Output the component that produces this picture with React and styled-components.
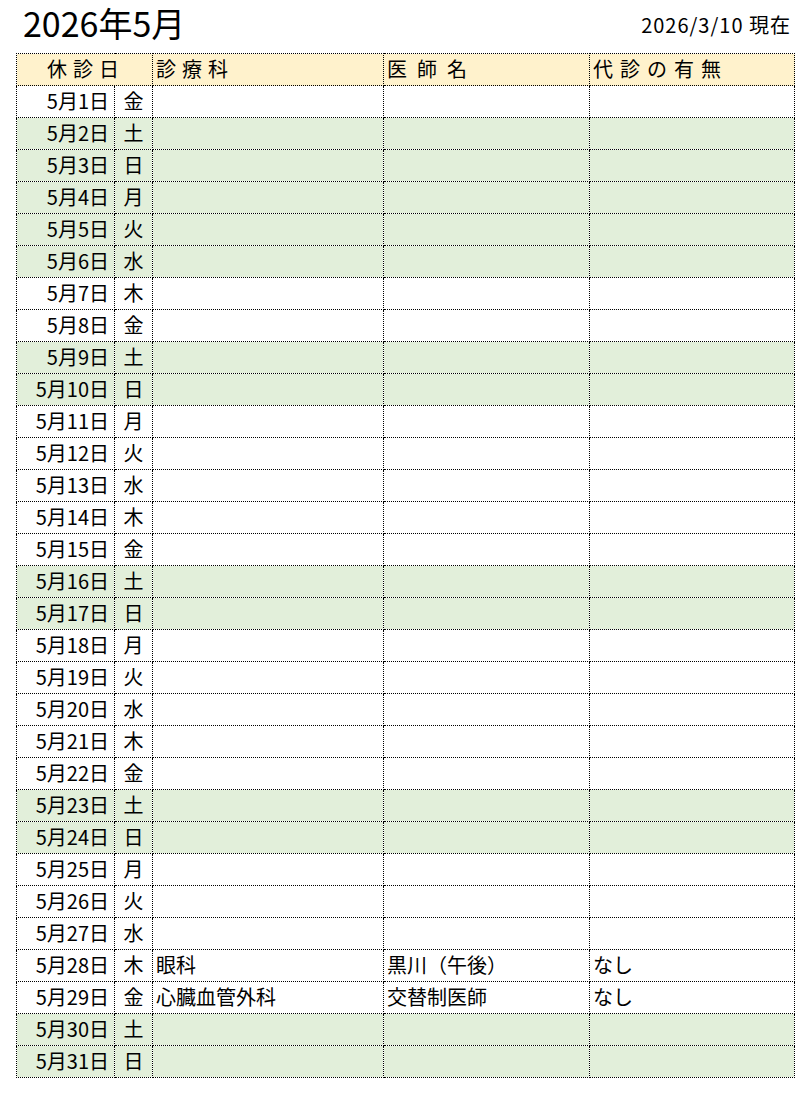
import React from "react";
import styled, { createGlobalStyle } from "styled-components";

const Global = createGlobalStyle`
  html, body { margin: 0; padding: 0; background: #ffffff; }
  body { font-family: "Noto Sans CJK JP", "Noto Sans", sans-serif; color: #000; }
`;

const Page = styled.div`
  width: 810px;
  padding: 0 0 0 16px;
  box-sizing: border-box;
`;

const TitleBar = styled.div`
  display: flex;
  justify-content: space-between;
  align-items: flex-start;
  height: 53px;
  width: 778px;
`;

const Title = styled.h1`
  margin: 0;
  padding: 0 0 0 7px;
  font-size: 34px;
  font-weight: 400;
  line-height: 46px;
`;

const AsOf = styled.div`
  font-size: 20px;
  line-height: 24px;
  letter-spacing: 1px;
  padding-top: 13px;
  padding-right: 3px;
`;

const Table = styled.table`
  border-collapse: collapse;
  table-layout: fixed;
  width: 778px;
  font-size: 20px;
`;

const HeadCell = styled.th`
  background: #fff2cc;
  border: 1px dotted #000;
  height: 29px;
  padding: 0 0 2px 3px;
  font-weight: 400;
  text-align: ${(p) => (p.$center ? "center" : "left")};
  letter-spacing: ${(p) => p.$spacing || "6px"};
  white-space: nowrap;
  line-height: 24px;
  vertical-align: middle;
`;

const Cell = styled.td`
  background: ${(p) => (p.$off ? "#e2efda" : "#ffffff")};
  border: 1px dotted #000;
  height: 29px;
  padding: 0 ${(p) => (p.$align === "right" ? "5px" : "3px")} 2px 3px;
  text-align: ${(p) => p.$align || "left"};
  white-space: nowrap;
  line-height: 24px;
  vertical-align: middle;
  overflow: hidden;
`;

const weekdays = ["金", "土", "日", "月", "火", "水", "木"];
const holidays = new Set([3, 4, 5, 6]);
const extra = {
  28: ["眼科", "黒川（午後）", "なし"],
  29: ["心臓血管外科", "交替制医師", "なし"],
};

const rows = Array.from({ length: 31 }, (_, i) => {
  const d = i + 1;
  const wd = weekdays[i % 7];
  const off = wd === "土" || wd === "日" || holidays.has(d);
  return { d, wd, off, data: extra[d] || ["", "", ""] };
});

export default function App() {
  return (
    <Page>
      <Global />
      <TitleBar>
        <Title>2026年5月</Title>
        <AsOf>2026/3/10 現在</AsOf>
      </TitleBar>
      <Table>
        <colgroup>
          <col style={{ width: 98 }} />
          <col style={{ width: 38 }} />
          <col style={{ width: 231 }} />
          <col style={{ width: 206 }} />
          <col style={{ width: 205 }} />
        </colgroup>
        <thead>
          <tr>
            <HeadCell colSpan={2} $center>休診日</HeadCell>
            <HeadCell>診療科</HeadCell>
            <HeadCell $spacing="10px">医師名</HeadCell>
            <HeadCell $spacing="7px">代診の有無</HeadCell>
          </tr>
        </thead>
        <tbody>
          {rows.map((r) => (
            <tr key={r.d}>
              <Cell $off={r.off} $align="right">5月{r.d}日</Cell>
              <Cell $off={r.off} $align="center">{r.wd}</Cell>
              <Cell $off={r.off}>{r.data[0]}</Cell>
              <Cell $off={r.off}>{r.data[1]}</Cell>
              <Cell $off={r.off}>{r.data[2]}</Cell>
            </tr>
          ))}
        </tbody>
      </Table>
    </Page>
  );
}
